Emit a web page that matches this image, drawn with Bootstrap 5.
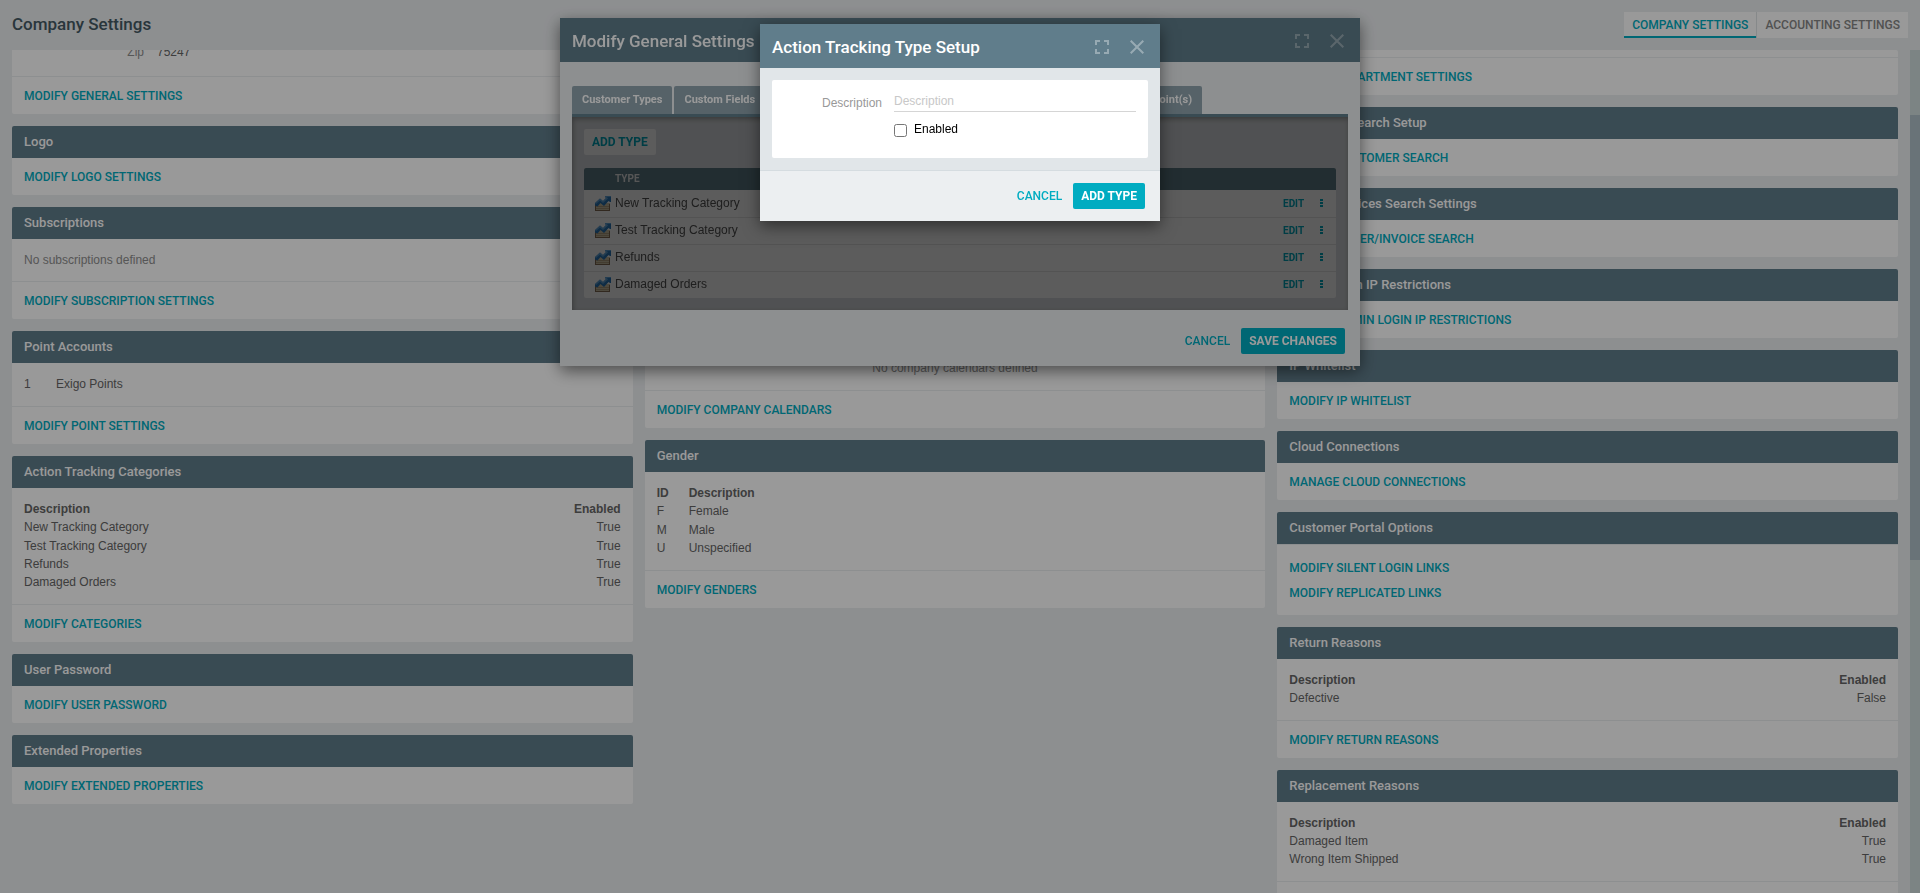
<!DOCTYPE html>
<html lang="en">
<head>
<meta charset="utf-8">
<meta name="viewport" content="width=device-width, initial-scale=1">
<title>Company Settings</title>
<link href="https://cdn.jsdelivr.net/npm/bootstrap@5.3.0/dist/css/bootstrap.min.css" rel="stylesheet">
<style>
:root{--teal:#00acc1;--slate:#607d8b;--fog:#eceff1;--ui:Roboto,sans-serif}
body{font:12px/18px "Liberation Sans",Arial,sans-serif;background:var(--fog);color:#666}
a{color:var(--teal);text-decoration:none}
h1,h2,h3{font-family:var(--ui);font-weight:500;margin:0}
.topbar{height:50px;padding:0 12px}
.topbar h1{font-size:17px;line-height:24px;color:#455a64;padding-bottom:2px}
.view-tabs a{font:500 12px/24px var(--ui);height:26px;padding:1px 8px 0;background:#fff;color:#888}
.view-tabs a.active{color:var(--teal);border-bottom:2px solid var(--teal)}
.view-tabs a+a{border-left:1px solid #e0e4e6}
.board{display:grid;grid-template-columns:repeat(3,minmax(0,1fr));gap:12px;padding:0 12px;overflow:hidden}
.stack{display:flex;flex-direction:column;gap:12px;min-width:0}
.stack-left{margin-top:-19px}
.stack-mid{margin-top:265px}
.tile{background:#fff;border-radius:2px;flex:none}
.tile h2{font-size:13px;line-height:32px;height:32px;padding:0 12px;color:#fff;background:var(--slate);border-radius:2px 2px 0 0}
.tile-body{padding:12px 12px 13px}
.tile-body+.tile-foot{border-top:1px solid #eceff1}
.tile-rest{height:7px}
.tile-rest+.tile-foot{border-top:1px solid #eceff1}
.tile-foot{padding:2px 12px 0}
.tile-foot a,.link-list a{display:block;font:500 12px/35px var(--ui)}
.link-list{border-top:1px solid #eceff1;padding:11px 12px 9px}
.link-list a{line-height:25px}
.tile table{width:100%;margin:0}
.tile th,.tile td{padding:0;vertical-align:bottom}
.tile tbody tr:nth-child(2):not(:last-child) td{height:19px}
.tile .num{width:32px}
.faint{color:#8f8f8f}
.zip-row{display:grid;grid-template-columns:120px 1fr;gap:13px;padding-bottom:2px}
.track{width:10px;background:#cfdddc}
.track-thumb{height:445px;margin-top:65px;background:#b0c0c8}

.dialog-box{border:0;border-radius:0;background:var(--fog);box-shadow:0 5px 15px rgba(0,0,0,.5);color:#333}
.dialog-head{height:44px;padding:2px 16px 0 12px;gap:21px;background:var(--slate);color:#fff}
.dialog-head h2{font-size:17px;line-height:24px}
.dialog-head button{border:0;background:none;padding:0;display:flex;opacity:.35;color:#fff}
.layer{display:block;overflow:hidden}
.layer-general{z-index:1040}
.layer-type{z-index:1060}
.layer-general .modal-dialog{max-width:800px;margin-top:18px}
.layer-type .modal-dialog{max-width:400px;margin-top:24px}
.shade{position:fixed;inset:0;z-index:1050;background:rgba(0,0,0,.4)}
.dialog-foot{padding:12px 15px 12px 12px;gap:3px}
.layer-general .dialog-foot{padding-top:18px}
.btn-ui{font:500 12px/26px var(--ui);height:26px;padding:0 8px;border:0;border-radius:2px;color:var(--teal)}
.btn-ui:hover{color:var(--teal)}
.btn-solid,.btn-solid:hover{background:var(--teal);color:#fff;font-weight:700}
.btn-pale,.btn-pale:hover{background:#fff;color:var(--teal);font-weight:700}
.tab-area{padding:24px 12px 0}
.strip{width:630px;max-width:100%;display:flex;gap:2px}
.strip a{font:700 11px/28px var(--ui);height:28px;padding:0 10px;background:#90a4ae;color:#fff;border-radius:2px 2px 0 0;white-space:nowrap}
.strip .wide{flex:1;text-align:center}
.pane{position:relative;padding:12px;background:#dfe3e6;box-shadow:inset 1px 2px 5px rgba(0,0,0,.3)}
.pane-edge{height:3px;background:var(--slate)}
.pane-shade{position:absolute;inset:0;background:rgba(0,0,0,.4)}
.type-table{width:100%;table-layout:fixed;border-collapse:separate;border-spacing:0;margin:13px 0 0;background:#fff;border-radius:2px;overflow:hidden}
.type-table th{font:700 10px/22px var(--ui);padding:0;background:var(--slate);color:#eee}
.type-table td{height:27px;padding:0 0 2px;border-top:1px solid #e8e8e8;vertical-align:middle;color:#555}
.type-table tbody tr:first-child td{border-top-color:#fff}
.type-table .pic{width:31px}
.type-table .pic svg{display:block;margin:2px 0 0 11px}
.type-table .act{width:37px}
.type-table .more{width:16px}
.type-table a{display:block;font:700 10px/18px var(--ui);padding-top:1px}
.type-table button{border:0;background:none;padding:0;display:block;color:var(--teal)}
.form-area{padding:12px;background:#e1e6e9;border-bottom:1px solid #d5dce0}
.form-sheet{background:#fff;border-radius:2px;height:78px;padding:11px 12px;display:grid;grid-template-columns:98px 1fr;column-gap:12px;align-content:start}
.form-sheet .cap{text-align:right;color:#999;padding-top:3px}
.form-sheet input[type=text]{border:0;border-bottom:1px solid #d5d5d5;padding:0;height:21px;outline:0;width:100%;color:#333}
.form-sheet input::placeholder{color:#c8c8c8}
.check-row{grid-column:2;display:flex;gap:7px;padding-top:8px;color:#000}
.check-row input{width:13px;height:13px;margin:4px 0 0}
</style>
</head>
<body class="vh-100 overflow-hidden d-flex flex-column">
<header class="topbar d-flex align-items-center justify-content-between flex-shrink-0">
  <h1>Company Settings</h1>
  <nav class="view-tabs d-flex">
    <a href="#" class="active">COMPANY SETTINGS</a>
    <a href="#">ACCOUNTING SETTINGS</a>
  </nav>
</header>

<div class="d-flex flex-grow-1 overflow-hidden">
<main class="board flex-grow-1">
  <div class="stack stack-left">
    <section class="tile">
      <div class="tile-body"><div class="zip-row"><span class="text-end faint">Zip</span><span>75247</span></div></div>
      <div class="tile-foot"><a href="#">MODIFY GENERAL SETTINGS</a></div>
    </section>
    <section class="tile">
      <h2>Logo</h2>
      <div class="tile-foot"><a href="#">MODIFY LOGO SETTINGS</a></div>
    </section>
    <section class="tile">
      <h2>Subscriptions</h2>
      <div class="tile-body faint pb-2 mb-1">No subscriptions defined</div>
      <div class="tile-foot"><a href="#">MODIFY SUBSCRIPTION SETTINGS</a></div>
    </section>
    <section class="tile">
      <h2>Point Accounts</h2>
      <div class="tile-body"><table><tr><td class="num">1</td><td>Exigo Points</td></tr></table></div>
      <div class="tile-foot"><a href="#">MODIFY POINT SETTINGS</a></div>
    </section>
    <section class="tile">
      <h2>Action Tracking Categories</h2>
      <div class="tile-body">
        <table>
          <thead><tr><th>Description</th><th class="text-end">Enabled</th></tr></thead>
          <tbody>
            <tr><td>New Tracking Category</td><td class="text-end">True</td></tr>
            <tr><td>Test Tracking Category</td><td class="text-end">True</td></tr>
            <tr><td>Refunds</td><td class="text-end">True</td></tr>
            <tr><td>Damaged Orders</td><td class="text-end">True</td></tr>
          </tbody>
        </table>
      </div>
      <div class="tile-foot"><a href="#">MODIFY CATEGORIES</a></div>
    </section>
    <section class="tile">
      <h2>User Password</h2>
      <div class="tile-foot"><a href="#">MODIFY USER PASSWORD</a></div>
    </section>
    <section class="tile">
      <h2>Extended Properties</h2>
      <div class="tile-foot"><a href="#">MODIFY EXTENDED PROPERTIES</a></div>
    </section>
  </div>

  <div class="stack stack-mid">
    <section class="tile">
      <h2>Company Calendars</h2>
      <div class="tile-body faint text-center">No company calendars defined</div>
      <div class="tile-foot"><a href="#">MODIFY COMPANY CALENDARS</a></div>
    </section>
    <section class="tile">
      <h2>Gender</h2>
      <div class="tile-body">
        <table>
          <thead><tr><th class="num">ID</th><th>Description</th></tr></thead>
          <tbody>
            <tr><td>F</td><td>Female</td></tr>
            <tr><td>M</td><td>Male</td></tr>
            <tr><td>U</td><td>Unspecified</td></tr>
          </tbody>
        </table>
      </div>
      <div class="tile-foot"><a href="#">MODIFY GENDERS</a></div>
    </section>
  </div>

  <div class="stack">
    <section class="tile">
      <div class="tile-rest"></div>
      <div class="tile-foot"><a href="#">MODIFY DEPARTMENT SETTINGS</a></div>
    </section>
    <section class="tile">
      <h2>Customer Search Setup</h2>
      <div class="tile-foot"><a href="#">MODIFY CUSTOMER SEARCH</a></div>
    </section>
    <section class="tile">
      <h2>Orders/Invoices Search Settings</h2>
      <div class="tile-foot"><a href="#">MODIFY ORDER/INVOICE SEARCH</a></div>
    </section>
    <section class="tile">
      <h2>Admin Login IP Restrictions</h2>
      <div class="tile-foot"><a href="#">MODIFY ADMIN LOGIN IP RESTRICTIONS</a></div>
    </section>
    <section class="tile">
      <h2>IP Whitelist</h2>
      <div class="tile-foot"><a href="#">MODIFY IP WHITELIST</a></div>
    </section>
    <section class="tile">
      <h2>Cloud Connections</h2>
      <div class="tile-foot"><a href="#">MANAGE CLOUD CONNECTIONS</a></div>
    </section>
    <section class="tile">
      <h2>Customer Portal Options</h2>
      <div class="link-list"><a href="#">MODIFY SILENT LOGIN LINKS</a><a href="#">MODIFY REPLICATED LINKS</a></div>
    </section>
    <section class="tile">
      <h2>Return Reasons</h2>
      <div class="tile-body">
        <table>
          <thead><tr><th>Description</th><th class="text-end">Enabled</th></tr></thead>
          <tbody><tr><td>Defective</td><td class="text-end">False</td></tr></tbody>
        </table>
      </div>
      <div class="tile-foot"><a href="#">MODIFY RETURN REASONS</a></div>
    </section>
    <section class="tile">
      <h2>Replacement Reasons</h2>
      <div class="tile-body">
        <table>
          <thead><tr><th>Description</th><th class="text-end">Enabled</th></tr></thead>
          <tbody>
            <tr><td>Damaged Item</td><td class="text-end">True</td></tr>
            <tr><td>Wrong Item Shipped</td><td class="text-end">True</td></tr>
          </tbody>
        </table>
      </div>
      <div class="tile-foot pb-4"></div>
    </section>
  </div>
</main>
<div class="track flex-shrink-0"><div class="track-thumb"></div></div>
</div>

<svg width="0" height="0" class="position-absolute" aria-hidden="true">
  <symbol id="expand" viewBox="0 0 14 14"><path fill="none" stroke="currentColor" stroke-width="2" d="M1 5V1h4M9 1h4v4M13 9v4H9M5 13H1V9"/></symbol>
  <symbol id="close" viewBox="0 0 14 14"><path fill="none" stroke="currentColor" stroke-width="2" d="M.7.7l12.6 12.6M13.3.7L.7 13.3"/></symbol>
  <symbol id="dots" viewBox="0 0 3 9"><path fill="currentColor" d="M0 0h3v2H0zM0 3h3v2H0zM0 6h3v2H0z"/></symbol>
  <symbol id="trend" viewBox="0 0 16 16">
    <path fill="#d8cbae" d="M0 7h15v8H0z"/>
    <path fill="#8a7058" d="M0 14h15v1H0zM0 8h1v7H0zM14 8h1v7h-1z"/>
    <path fill="#bba888" d="M1 10h13v1H1zM1 12h13v1H1z"/>
    <path fill="#2a7cc0" d="M0 7l5-4.500 3 2.500 3-3-1-1V0h6v6h-1l-1.500-1L9 10 5.500 7 2.500 10.500 0 9.500z"/>
    <path fill="#7cbcec" d="M0 7l5-4.500 3 2.500 3-3-1-1V0h6v1h-4l1 1.500L8 7 5 4.500 1 8z" opacity=".7"/>
  </symbol>
</svg>

<div class="modal layer layer-general" role="dialog" aria-label="Modify General Settings">
  <div class="modal-dialog">
    <div class="modal-content dialog-box">
      <div class="dialog-head d-flex align-items-center">
        <h2 class="me-auto">Modify General Settings</h2>
        <button type="button" aria-label="Full screen"><svg width="14" height="14"><use href="#expand"/></svg></button>
        <button type="button" aria-label="Close"><svg width="14" height="14"><use href="#close"/></svg></button>
      </div>
      <div class="tab-area">
        <nav class="strip"><a href="#">Customer Types</a><a href="#">Custom Fields</a><a href="#" class="wide">Action Tracking</a><a href="#">Endpoint(s)</a></nav>
        <div class="pane-edge"></div>
        <div class="pane">
          <button type="button" class="btn-ui btn-pale d-block">ADD TYPE</button>
          <table class="type-table">
            <thead><tr><th class="pic"></th><th>TYPE</th><th class="act"></th><th class="more"></th></tr></thead>
            <tbody>
              <tr><td class="pic"><svg width="16" height="16"><use href="#trend"/></svg></td><td>New Tracking Category</td><td><a href="#">EDIT</a></td><td><button type="button" aria-label="More"><svg class="d-block" width="3" height="9"><use href="#dots"/></svg></button></td></tr>
              <tr><td class="pic"><svg width="16" height="16"><use href="#trend"/></svg></td><td>Test Tracking Category</td><td><a href="#">EDIT</a></td><td><button type="button" aria-label="More"><svg class="d-block" width="3" height="9"><use href="#dots"/></svg></button></td></tr>
              <tr><td class="pic"><svg width="16" height="16"><use href="#trend"/></svg></td><td>Refunds</td><td><a href="#">EDIT</a></td><td><button type="button" aria-label="More"><svg class="d-block" width="3" height="9"><use href="#dots"/></svg></button></td></tr>
              <tr><td class="pic"><svg width="16" height="16"><use href="#trend"/></svg></td><td>Damaged Orders</td><td><a href="#">EDIT</a></td><td><button type="button" aria-label="More"><svg class="d-block" width="3" height="9"><use href="#dots"/></svg></button></td></tr>
            </tbody>
          </table>
          <div class="pane-shade"></div>
        </div>
      </div>
      <div class="dialog-foot d-flex justify-content-end">
        <button type="button" class="btn btn-ui">CANCEL</button>
        <button type="button" class="btn btn-ui btn-solid">SAVE CHANGES</button>
      </div>
    </div>
  </div>
</div>

<div class="shade"></div>

<div class="modal layer layer-type" role="dialog" aria-label="Action Tracking Type Setup">
  <div class="modal-dialog">
    <div class="modal-content dialog-box">
      <div class="dialog-head d-flex align-items-center">
        <h2 class="me-auto">Action Tracking Type Setup</h2>
        <button type="button" aria-label="Full screen"><svg width="14" height="14"><use href="#expand"/></svg></button>
        <button type="button" aria-label="Close"><svg width="14" height="14"><use href="#close"/></svg></button>
      </div>
      <div class="form-area">
        <div class="form-sheet">
          <label class="cap" for="type-desc">Description</label>
          <input type="text" id="type-desc" placeholder="Description">
          <div class="check-row"><input type="checkbox" id="type-on"><label for="type-on">Enabled</label></div>
        </div>
      </div>
      <div class="dialog-foot d-flex justify-content-end">
        <button type="button" class="btn btn-ui">CANCEL</button>
        <button type="button" class="btn btn-ui btn-solid">ADD TYPE</button>
      </div>
    </div>
  </div>
</div>
<script src="https://cdn.jsdelivr.net/npm/bootstrap@5.3.0/dist/js/bootstrap.bundle.min.js"></script>
</body>
</html>
